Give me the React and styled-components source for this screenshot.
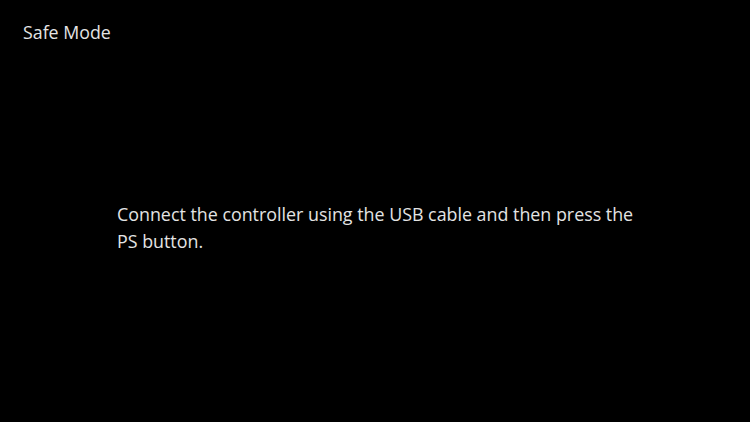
import React from "react";
import styled, { createGlobalStyle } from "styled-components";

const GlobalStyle = createGlobalStyle`
  html, body {
    margin: 0;
    padding: 0;
    background: #000000;
  }
`;

const Screen = styled.div`
  width: 750px;
  height: 422px;
  background: #000000;
  color: #e4e4e4;
  font-family: "Open Sans", "Noto Sans", sans-serif;
  display: flex;
  flex-direction: column;
  overflow: hidden;
`;

const Header = styled.div`
  padding: 20px 0 0 23px;
  font-size: 17.8px;
  line-height: 24px;
`;

const Body = styled.div`
  padding: 157px 0 0 117px;
`;

const Message = styled.p`
  margin: 0;
  width: 525px;
  font-size: 17.85px;
  line-height: 27px;
`;

function App() {
  return (
    <>
      <GlobalStyle />
      <Screen>
        <Header>Safe Mode</Header>
        <Body>
          <Message>
            Connect the controller using the USB cable and then press the PS button.
          </Message>
        </Body>
      </Screen>
    </>
  );
}

export default App;
